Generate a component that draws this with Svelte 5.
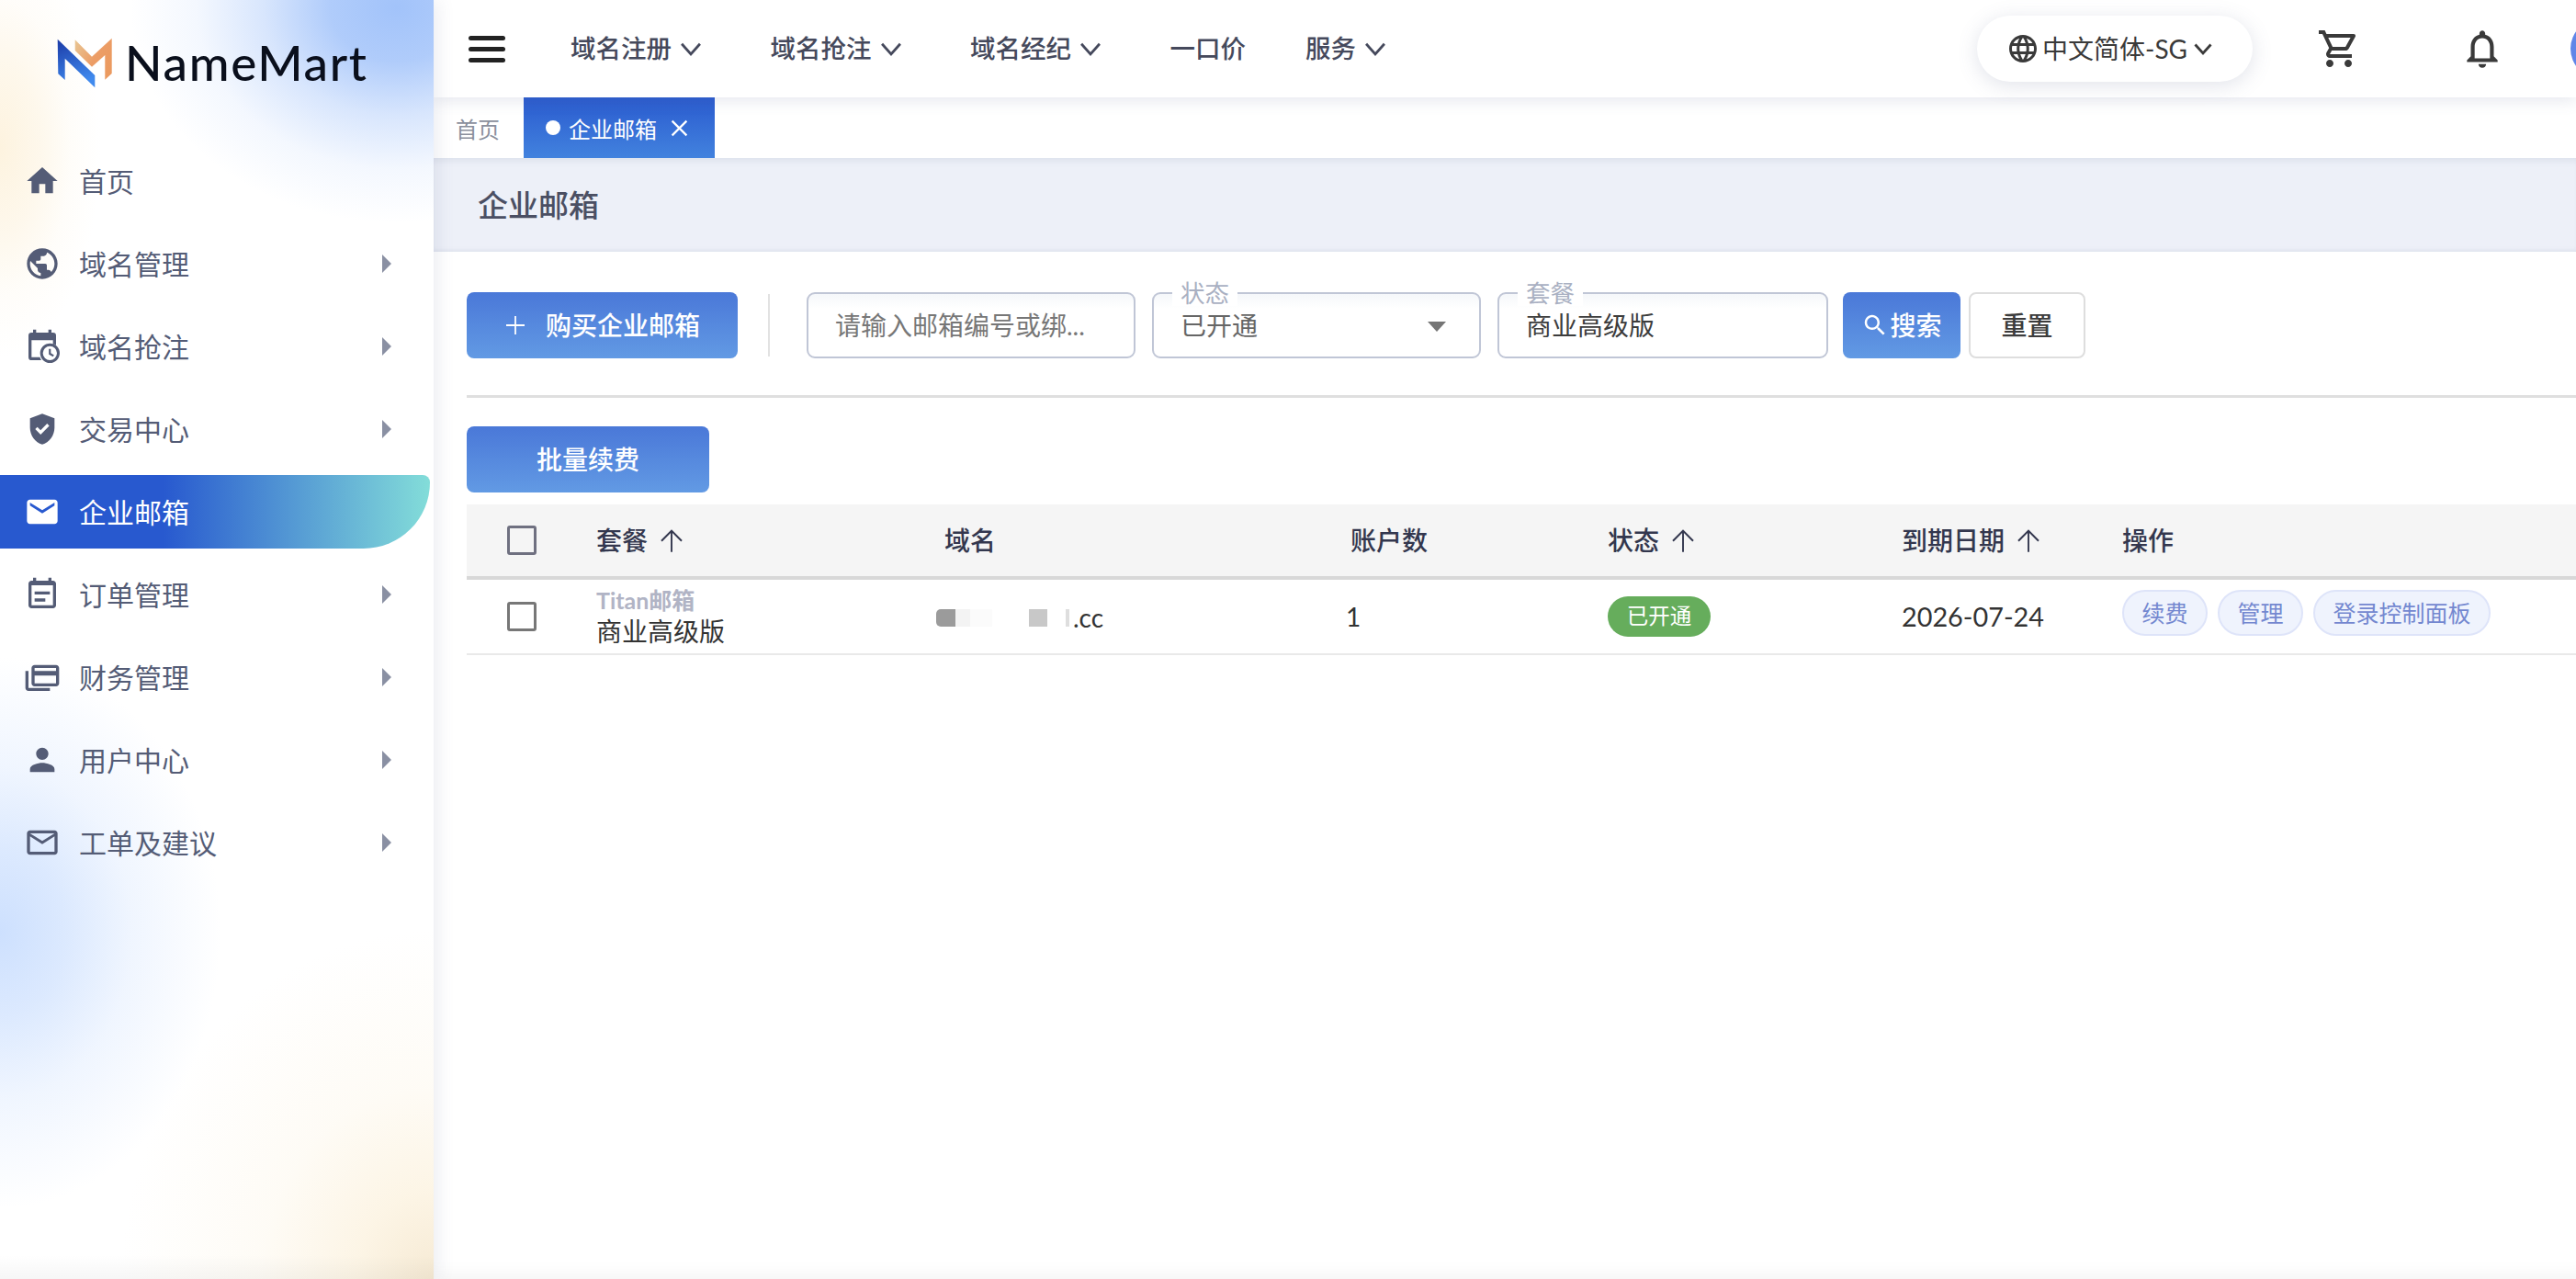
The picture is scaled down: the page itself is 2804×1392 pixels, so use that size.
<script>
  const icons = {
    home: 'M10 20v-6h4v6h5v-8h3L12 3 2 12h3v8z',
    globe: 'M12 2C6.48 2 2 6.48 2 12s4.48 10 10 10 10-4.48 10-10S17.52 2 12 2zm-1 17.93c-3.95-.49-7-3.85-7-7.93 0-.62.08-1.21.21-1.79L9 15v1c0 1.1.9 2 2 2v1.93zm6.9-2.54c-.26-.81-1-1.39-1.9-1.39h-1v-3c0-.55-.45-1-1-1H8v-2h2c.55 0 1-.45 1-1V7h2c1.1 0 2-.9 2-2v-.41c2.93 1.19 5 4.06 5 7.41 0 2.08-.8 3.97-2.1 5.39z',
    calendarClock: 'M19 3h-1V1h-2v2H8V1H6v2H5a2 2 0 0 0-2 2v14a2 2 0 0 0 2 2h6.4a7 7 0 0 1-.9-2H5V8h14v2.3a7 7 0 0 1 2 .9V5a2 2 0 0 0-2-2zM17 10a6.4 6.4 0 1 0 0 12.8 6.4 6.4 0 0 0 0-12.8zm0 1.8a4.6 4.6 0 1 1 0 9.2 4.6 4.6 0 0 1 0-9.2zM16.3 13.6v3.6l2.7 1.6.7-1.1-2.1-1.3v-2.8z',
    shield: 'M12 2L4 5v6.09c0 5.05 3.41 9.76 8 10.91 4.59-1.15 8-5.86 8-10.91V5l-8-3zm-1.06 13.54L7.4 12l1.41-1.41 2.12 2.12 4.24-4.24 1.41 1.41-5.64 5.66z',
    mail: 'M20 4H4c-1.1 0-1.99.9-1.99 2L2 18c0 1.1.9 2 2 2h16c1.1 0 2-.9 2-2V6c0-1.1-.9-2-2-2zm0 4l-8 5-8-5V6l8 5 8-5v2z',
    note: 'M19 3h-1V1h-2v2H8V1H6v2H5c-1.1 0-2 .9-2 2v14c0 1.1.9 2 2 2h14c1.1 0 2-.9 2-2V5c0-1.1-.9-2-2-2zm0 16H5V6h14v13zM17 10H7v2h10v-2zM14 14.6H7v2h7v-2z',
    cards: 'M3 8H1v11c0 1.1.9 2 2 2h14v-2H3V8zm18-4H7c-1.1 0-2 .9-2 2v10c0 1.1.9 2 2 2h14c1.1 0 2-.9 2-2V6c0-1.1-.9-2-2-2zm0 12H7v-5h14v5zm0-8H7V6h14v2z',
    person: 'M12 12c2.21 0 4-1.79 4-4s-1.79-4-4-4-4 1.79-4 4 1.79 4 4 4zm0 2c-2.67 0-8 1.34-8 4v2h16v-2c0-2.66-5.33-4-8-4z',
    mailOutline: 'M20 4H4c-1.1 0-1.99.9-1.99 2L2 18c0 1.1.9 2 2 2h16c1.1 0 2-.9 2-2V6c0-1.1-.9-2-2-2zm0 14H4V8l8 5 8-5v10zm-8-7L4 6h16l-8 5z'
  };

  const menu = [
    { label: '首页', icon: icons.home },
    { label: '域名管理', icon: icons.globe, sub: true },
    { label: '域名抢注', icon: icons.calendarClock, sub: true },
    { label: '交易中心', icon: icons.shield, sub: true },
    { label: '企业邮箱', icon: icons.mail, active: true },
    { label: '订单管理', icon: icons.note, sub: true },
    { label: '财务管理', icon: icons.cards, sub: true },
    { label: '用户中心', icon: icons.person, sub: true },
    { label: '工单及建议', icon: icons.mailOutline, sub: true }
  ];

  const topNav = [
    { label: '域名注册', drop: true },
    { label: '域名抢注', drop: true },
    { label: '域名经纪', drop: true },
    { label: '一口价' },
    { label: '服务', drop: true }
  ];

  const columns = [
    { label: '套餐', sort: true },
    { label: '域名' },
    { label: '账户数' },
    { label: '状态', sort: true },
    { label: '到期日期', sort: true },
    { label: '操作' }
  ];

  const arrowUp = 'M4.6 12l.9.9L11.4 7v13h1.2V7l5.9 5.9.9-.9L12 4.6z';
  const chevron = 'M3.5 7.5l8.5 9.5 8.5-9.5';
</script>

<div class="app">
  <aside class="sidebar">
    <div class="logo">
      <svg class="logo-mark" viewBox="0 0 62 56" width="62" height="56">
        <defs>
          <linearGradient id="lb" x1="0" y1="0" x2="0.3" y2="1">
            <stop offset="0" stop-color="#1b3aa6" />
            <stop offset="1" stop-color="#408aee" />
          </linearGradient>
          <linearGradient id="lo" x1="0" y1="0" x2="1" y2="0.6">
            <stop offset="0" stop-color="#e8c795" />
            <stop offset="0.6" stop-color="#ec9d66" />
            <stop offset="1" stop-color="#eb9a60" />
          </linearGradient>
        </defs>
        <path fill="url(#lo)" d="M19.7 2.3V14L38 31.7 52.3 19v26.7l7.4-6.7V.7L38 20.7z" />
        <path fill="url(#lb)" d="M.7 1.7L1.3 39.3 8.7 46V22.7L41.3 54.3V41z" />
      </svg>
      <span class="logo-text">NameMart</span>
    </div>
    <nav class="menu">
      {#each menu as item}
        <div class="menu-item" class:active={item.active}>
          <svg class="menu-icon" viewBox="0 0 24 24" width="40" height="40"><path d={item.icon} /></svg>
          <span class="menu-label">{item.label}</span>
          {#if item.sub}<span class="caret"></span>{/if}
        </div>
      {/each}
    </nav>
  </aside>

  <main class="main">
    <header class="header">
      <div class="burger"><i></i><i></i><i></i></div>
      <nav class="top-nav">
        {#each topNav as link}
          <div class="top-link" class:drop={link.drop}>
            <span>{link.label}</span>
            {#if link.drop}
              <svg viewBox="0 0 24 24" width="28" height="28"><path d={chevron} /></svg>
            {/if}
          </div>
        {/each}
      </nav>
      <div class="lang">
        <svg class="lang-globe" viewBox="0 0 24 24" width="36" height="36"><path d="M11.99 2C6.47 2 2 6.48 2 12s4.47 10 9.99 10C17.52 22 22 17.52 22 12S17.52 2 11.99 2zm6.93 6h-2.95c-.32-1.25-.78-2.45-1.38-3.56 1.84.63 3.37 1.91 4.33 3.56zM12 4.04c.83 1.2 1.48 2.53 1.91 3.96h-3.82c.43-1.43 1.08-2.76 1.91-3.96zM4.26 14C4.1 13.36 4 12.69 4 12s.1-1.36.26-2h3.38c-.08.66-.14 1.32-.14 2 0 .68.06 1.34.14 2H4.26zm.82 2h2.95c.32 1.25.78 2.45 1.38 3.56-1.84-.63-3.37-1.9-4.33-3.56zm2.95-8H5.08c.96-1.66 2.49-2.93 4.33-3.56C8.81 5.55 8.35 6.75 8.03 8zM12 19.96c-.83-1.2-1.48-2.53-1.91-3.96h3.82c-.43 1.43-1.08 2.76-1.91 3.96zM14.34 14H9.66c-.09-.66-.16-1.32-.16-2 0-.68.07-1.35.16-2h4.68c.09.65.16 1.32.16 2 0 .68-.07 1.34-.16 2zm.25 5.56c.6-1.11 1.06-2.31 1.38-3.56h2.95c-.96 1.65-2.49 2.93-4.33 3.56zM16.36 14c.08-.66.14-1.32.14-2 0-.68-.06-1.34-.14-2h3.38c.16.64.26 1.31.26 2s-.1 1.36-.26 2h-3.38z" /></svg>
        <span>中文简体-SG</span>
        <svg class="lang-chev" viewBox="0 0 24 24" width="24" height="24"><path d={chevron} /></svg>
      </div>
      <svg class="cart" viewBox="0 0 24 24" width="48" height="48"><path d="M15.55 13c.75 0 1.41-.41 1.75-1.03l3.58-6.49c.37-.66-.11-1.48-.87-1.48H5.21l-.94-2H1v2h2l3.6 7.59-1.35 2.44C4.52 15.37 5.48 17 7 17h12v-2H7l1.1-2h7.45zM6.16 6h12.15l-2.76 5H8.53L6.16 6zM7 18c-1.1 0-1.99.9-1.99 2S5.9 22 7 22s2-.9 2-2-.9-2-2-2zm10 0c-1.1 0-1.99.9-1.99 2s.89 2 1.99 2 2-.9 2-2-.9-2-2-2z" /></svg>
      <svg class="bell" viewBox="0 0 24 24" width="50" height="50"><path d="M12 22c1.1 0 2-.9 2-2h-4c0 1.1.9 2 2 2zm6-6v-5c0-3.07-1.63-5.64-4.5-6.32V4c0-.83-.67-1.5-1.5-1.5s-1.5.67-1.5 1.5v.68C7.64 5.36 6 7.92 6 11v5l-2 2v1h16v-1l-2-2zm-2 1H8v-6c0-2.48 1.51-4.5 4-4.5s4 2.02 4 4.5v6z" /></svg>
      <div class="avatar"></div>
    </header>

    <div class="tabs">
      <div class="tab">首页</div>
      <div class="tab current">
        <i class="dot"></i>
        <span>企业邮箱</span>
        <svg viewBox="0 0 24 24" width="27" height="27"><path d="M5 5l14 14M19 5L5 19" /></svg>
      </div>
    </div>

    <div class="title-bar">企业邮箱</div>

    <section class="content">
      <div class="filters">
        <button class="btn primary buy">
          <svg viewBox="0 0 24 24" width="24" height="24"><path d="M12 2v20M2 12h20" /></svg>
          购买企业邮箱
        </button>
        <div class="vline"></div>
        <div class="field"><span class="placeholder">请输入邮箱编号或绑...</span></div>
        <div class="field">
          <span class="legend">状态</span>
          <span class="value muted">已开通</span>
          <i class="select-caret"></i>
        </div>
        <div class="field pkg">
          <span class="legend">套餐</span>
          <span class="value">商业高级版</span>
        </div>
        <button class="btn primary search">
          <svg viewBox="0 0 24 24" width="30" height="30"><path d="M15.5 14h-.79l-.28-.27C15.41 12.59 16 11.11 16 9.5 16 5.91 13.09 3 9.5 3S3 5.91 3 9.5 5.91 16 9.5 16c1.61 0 3.09-.59 4.23-1.57l.27.28v.79l5 4.99L20.49 19l-4.99-5zm-6 0C7.01 14 5 11.99 5 9.5S7.01 5 9.5 5 14 7.01 14 9.5 11.99 14 9.5 14z" /></svg>
          搜索
        </button>
        <button class="btn reset">重置</button>
      </div>

      <div class="hline"></div>

      <button class="btn primary batch">批量续费</button>

      <div class="table">
        <div class="row head">
          <div class="cell check"><i class="box"></i></div>
          {#each columns as col}
            <div class="cell">
              {col.label}
              {#if col.sort}
                <svg class="sort" viewBox="0 0 24 24" width="38" height="38"><path d={arrowUp} /></svg>
              {/if}
            </div>
          {/each}
        </div>
        <div class="row body">
          <div class="cell check"><i class="box light"></i></div>
          <div class="cell plan">
            <span class="plan-type">Titan邮箱</span>
            <span class="plan-name">商业高级版</span>
          </div>
          <div class="cell domain">
            <span class="mosaic">
              <i class="m1"></i><i class="m2"></i><i class="m3"></i><i class="m4"></i><i class="m5"></i>
            </span>.cc
          </div>
          <div class="cell count">1</div>
          <div class="cell"><span class="badge">已开通</span></div>
          <div class="cell date">2026-07-24</div>
          <div class="cell actions">
            <span class="pill">续费</span>
            <span class="pill">管理</span>
            <span class="pill">登录控制面板</span>
          </div>
        </div>
      </div>
    </section>
  </main>
</div>

<style>
  :global(body) {
    margin: 0;
    background: #fff;
    overflow: hidden;
  }

  .app {
    display: flex;
    width: 2804px;
    height: 1392px;
    overflow: hidden;
    font-family: Lato, "Noto Sans CJK SC", sans-serif;
    color: #333;
  }

  /* sidebar */
  .sidebar {
    position: relative;
    z-index: 3;
    flex: 0 0 472px;
    box-sizing: border-box;
    padding-top: 38px;
    background:
      linear-gradient(0deg, rgba(0, 0, 0, 0.035), rgba(0, 0, 0, 0) 26px),
      radial-gradient(ellipse 290px 235px at 432px 8px, #a2c3fa 0%, rgba(162, 195, 250, 0.85) 25%, rgba(162, 195, 250, 0.42) 50%, rgba(162, 195, 250, 0.12) 75%, rgba(162, 195, 250, 0) 100%),
      radial-gradient(ellipse 110px 230px at 0 160px, #fdf3df 0%, rgba(253, 243, 223, 0.6) 40%, rgba(253, 243, 223, 0.18) 70%, rgba(253, 243, 223, 0) 100%),
      radial-gradient(ellipse 240px 300px at 0 1015px, #cde0fe 0%, rgba(205, 224, 254, 0.7) 30%, rgba(205, 224, 254, 0.3) 60%, rgba(205, 224, 254, 0) 100%),
      radial-gradient(ellipse 340px 380px at 472px 1392px, #f6ead4 0%, rgba(252, 243, 225, 0.85) 25%, rgba(253, 247, 234, 0.45) 55%, rgba(253, 247, 234, 0) 100%),
      #fff;
    box-shadow: 4px 0 18px rgba(90, 100, 140, 0.12);
  }

  .logo {
    display: flex;
    align-items: center;
    height: 62px;
    padding-left: 62px;
    gap: 12px;
  }

  .logo-text {
    margin-top: -3px;
    font-size: 53px;
    font-weight: 500;
    letter-spacing: 1.7px;
    color: #0a0f1c;
    line-height: 1;
  }

  .menu {
    display: flex;
    flex-direction: column;
    gap: 10px;
    margin-top: 57px;
  }

  .menu-item {
    display: flex;
    align-items: center;
    width: 468px;
    height: 80px;
    padding-left: 26px;
    box-sizing: border-box;
    color: #545c76;
    fill: #545c76;
  }

  .menu-item.active {
    color: #fff;
    fill: #fff;
    background: linear-gradient(90deg, #2859cf 38%, #83ddd9 100%);
    border-radius: 0 8px 74px 0;
  }

  .menu-label {
    margin-left: 20px;
    font-size: 30px;
    line-height: 1;
  }

  .caret {
    position: absolute;
    left: 416px;
    width: 0;
    height: 0;
    border-left: 10px solid #8a90a3;
    border-top: 10px solid transparent;
    border-bottom: 10px solid transparent;
  }

  /* main column */
  .main {
    flex: 1;
    min-width: 0;
    display: flex;
    flex-direction: column;
    background: #fff;
    box-shadow: inset 0 -22px 20px -18px rgba(0, 0, 0, 0.05);
  }

  .header {
    position: relative;
    z-index: 2;
    display: flex;
    align-items: center;
    flex: 0 0 106px;
    padding-left: 38px;
    background: #fff;
    box-shadow: 0 3px 16px rgba(90, 100, 140, 0.16);
  }

  .burger {
    display: flex;
    flex-direction: column;
    gap: 7px;
    width: 40px;
  }

  .burger i {
    display: block;
    height: 5px;
    border-radius: 3px;
    background: #222;
  }

  .top-nav {
    display: flex;
    gap: 65px;
    margin-left: 71px;
  }

  .top-link {
    display: flex;
    align-items: center;
    font-size: 27.5px;
    line-height: 1;
    font-weight: 500;
    color: #45495c;
  }

  .top-link.drop {
    padding-right: 7.5px;
  }

  .top-link svg {
    margin-left: 7px;
    fill: none;
    stroke: #45495c;
    stroke-width: 2.4;
  }

  .lang {
    display: flex;
    align-items: center;
    box-sizing: border-box;
    width: 300px;
    height: 72px;
    margin-left: auto;
    padding-left: 32px;
    border-radius: 36px;
    background: #fff;
    box-shadow: 0 4px 22px rgba(90, 100, 140, 0.18);
    font-size: 28px;
    line-height: 1;
    color: #3a3a3a;
  }

  .lang-globe {
    fill: #3a3a3a;
    margin-right: 3px;
  }

  .lang-chev {
    fill: none;
    stroke: #3a3a3a;
    stroke-width: 2.8;
    margin-left: 5px;
  }

  .cart {
    fill: #3a3a3a;
    margin-left: 70px;
  }

  .bell {
    fill: #3a3a3a;
    margin-left: 107px;
  }

  .avatar {
    flex: none;
    width: 64px;
    height: 64px;
    margin-left: 71px;
    margin-right: -58px;
    border-radius: 50%;
    background: #5f86e8;
  }

  .tabs {
    display: flex;
    flex: 0 0 66px;
    background: #fff;
  }

  .tab {
    display: flex;
    align-items: center;
    width: 98px;
    padding-left: 24px;
    box-sizing: border-box;
    font-size: 24px;
    color: #8a8f9c;
  }

  .tab.current {
    width: 208px;
    padding-left: 24px;
    color: #fff;
    background: linear-gradient(180deg, #2a5bcf, #4282de);
  }

  .dot {
    width: 16px;
    height: 16px;
    margin-right: 9px;
    border-radius: 50%;
    background: #fff;
  }

  .tab.current svg {
    margin-left: 11px;
    fill: none;
    stroke: #fff;
    stroke-width: 2;
  }

  .title-bar {
    flex: 0 0 102px;
    box-sizing: border-box;
    display: flex;
    align-items: center;
    padding: 0 0 3px 48px;
    background: #edf0f8;
    box-shadow: inset 0 8px 8px -6px rgba(100, 110, 150, 0.14), inset 0 -5px 5px -4px rgba(100, 110, 150, 0.14);
    font-size: 33px;
    font-weight: 500;
    color: #4b4f63;
  }

  .content {
    flex: 1;
    padding: 44px 0 0 36px;
  }

  .filters {
    display: flex;
    align-items: center;
    height: 72px;
  }

  .btn {
    display: flex;
    align-items: center;
    justify-content: center;
    height: 72px;
    padding: 0;
    border: none;
    border-radius: 8px;
    font-family: inherit;
    font-size: 28px;
    font-weight: 500;
    line-height: 1;
  }

  .primary {
    color: #fff;
    background: linear-gradient(180deg, #4a78d8, #629ae4);
  }

  .buy {
    width: 295px;
    gap: 21px;
  }

  .buy svg {
    fill: none;
    stroke: #fff;
    stroke-width: 1.8;
  }

  .vline {
    width: 2px;
    height: 68px;
    margin: 0 40px 0 33px;
    background: #e2e2e2;
  }

  .field {
    position: relative;
    display: flex;
    align-items: center;
    box-sizing: border-box;
    width: 358px;
    height: 72px;
    margin-right: 18px;
    padding-left: 29px;
    border: 2px solid #c0c6d6;
    border-radius: 9px;
    background: linear-gradient(180deg, #f5f7fa, #fff 16px);
    font-size: 28px;
    line-height: 1;
  }

  .field.pkg {
    width: 360px;
    margin-right: 16px;
  }

  .placeholder {
    color: #777;
  }

  .value {
    color: #3c3c3c;
  }

  .value.muted {
    color: #666;
  }

  .legend {
    position: absolute;
    left: 20px;
    top: -15px;
    padding: 0 9px;
    background: #fff;
    font-size: 26.5px;
    line-height: 28px;
    color: #a9b0c2;
  }

  .select-caret {
    position: absolute;
    right: 36px;
    top: 30px;
    width: 0;
    height: 0;
    border-left: 10px solid transparent;
    border-right: 10px solid transparent;
    border-top: 11px solid #757575;
  }

  .search {
    width: 128px;
    margin-right: 9px;
    gap: 1px;
  }

  .search svg {
    fill: #fff;
  }

  .reset {
    width: 127px;
    box-sizing: border-box;
    background: #fff;
    border: 2px solid #dedede;
    color: #3c3c3c;
  }

  .hline {
    height: 3px;
    margin-top: 40px;
    background: #dfdfdf;
  }

  .batch {
    width: 264px;
    margin-top: 31px;
  }

  .table {
    margin-top: 13px;
  }

  .row {
    display: grid;
    grid-template-columns: 141px 379px 442px 280px 320px 240px 1fr;
    align-items: center;
    font-size: 28px;
  }

  .head {
    height: 82px;
    box-sizing: border-box;
    background: #f5f5f5;
    border-bottom: 4px solid #d8d8d8;
    color: #33374e;
    font-weight: 500;
  }

  .body {
    height: 82px;
    box-sizing: border-box;
    border-bottom: 2px solid #e9e9e9;
  }

  .cell {
    display: flex;
    align-items: center;
    line-height: 1;
  }

  .check {
    justify-content: center;
    width: 120px;
  }

  .box {
    box-sizing: border-box;
    width: 32px;
    height: 32px;
    border: 3px solid #6f7080;
    border-radius: 3px;
  }

  .box.light {
    border-color: #777;
  }

  .sort {
    margin-left: 7px;
    fill: #33374e;
  }

  .plan {
    flex-direction: column;
    align-items: flex-start;
    gap: 7px;
  }

  .plan-type {
    font-size: 25px;
    font-weight: 700;
    color: #b1b4c5;
  }

  .plan-name {
    font-size: 28px;
    color: #333;
  }

  .domain {
    margin-left: -9px;
    padding-top: 2px;
  }

  .count {
    margin-left: -5px;
  }

  .date {
    font-size: 28.8px;
  }

  .mosaic {
    display: flex;
    align-items: stretch;
    height: 19px;
    margin-right: 4px;
  }

  .mosaic i {
    display: block;
  }

  .m1 {
    width: 21px;
    background: #9b9b9b;
    border-radius: 5px 0 0 5px;
  }

  .m2 {
    width: 16px;
    background: #f3f3f3;
  }

  .m3 {
    width: 24px;
    margin-right: 40px;
    background: #fbfbfb;
  }

  .m4 {
    width: 20px;
    margin-right: 20px;
    background: #c8c8c8;
  }

  .m5 {
    width: 4px;
    background: #dedede;
  }

  .badge {
    display: inline-flex;
    align-items: center;
    justify-content: center;
    width: 112px;
    height: 44px;
    border-radius: 22px;
    background: #66ad5c;
    color: #fff;
    font-size: 23.5px;
  }

  .actions {
    gap: 11px;
    padding-bottom: 8px;
  }

  .pill {
    display: flex;
    align-items: center;
    box-sizing: border-box;
    height: 50px;
    padding: 0 19.5px;
    border: 2px solid #dee4f9;
    border-radius: 25px;
    background: #eff3fd;
    color: #7488d0;
    font-size: 25px;
  }
</style>
